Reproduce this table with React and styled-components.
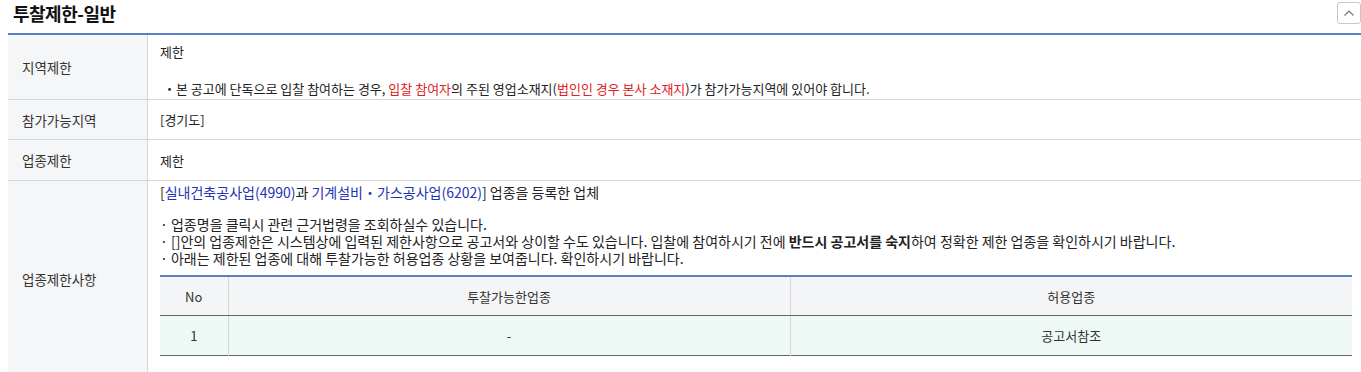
import React from "react";
import styled, { createGlobalStyle } from "styled-components";

const Global = createGlobalStyle`
  html, body { margin: 0; padding: 0; background: #fff; }
  body {
    font-family: "Noto Sans CJK KR", "Noto Sans", sans-serif;
    color: #222;
    font-size: 13px;
  }
`;

const Wrap = styled.div`
  padding-left: 8px;
`;

const Header = styled.div`
  display: flex;
  align-items: center;
  justify-content: space-between;
  height: 33px;
`;

const Title = styled.h2`
  margin: 0 0 8px 5px;
  font-size: 18px;
  line-height: 22px;
  font-weight: 700;
  letter-spacing: -0.5px;
  color: #111;
`;

const Toggle = styled.button`
  width: 24px;
  height: 22px;
  margin-bottom: 8px;
  padding: 0;
  border: 1px solid #c8c8c8;
  border-radius: 3px;
  background: #fff;
  display: flex;
  align-items: center;
  justify-content: center;
  color: #777;
`;

const Sheet = styled.div`
  border-top: 2px solid #5b7fc7;
`;

const Row = styled.div`
  display: grid;
  grid-template-columns: 140px 1fr;
  border-bottom: 1px solid #d6d6d6;
`;

const Label = styled.div`
  background: #f5f6f8;
  border-right: 1px solid #d6d6d6;
  display: flex;
  align-items: center;
  padding-left: 14px;
  font-size: 13.5px;
  color: #333;
`;

const Value = styled.div`
  padding: ${(p) => p.$pad || "11px 12px"};
  line-height: 17px;
  font-size: ${(p) => p.$fs || 13}px;
`;

const Line = styled.div`
  margin-top: ${(p) => p.$mt || 0}px;
  white-space: nowrap;
`;

const Red = styled.span`
  color: #e0211f;
`;

const Link = styled.span`
  color: #2233b5;
`;

const B = styled.b`
  font-weight: 700;
`;

const SubTable = styled.table`
  margin-top: ${(p) => p.$mt || 0}px;
  width: calc(100% - 9px);
  border-collapse: collapse;
  border-top: 2px solid #5b7fc7;
  border-bottom: 1px solid #666;
  table-layout: fixed;
`;

const Th = styled.th`
  height: 38px;
  padding: 0;
  background: #f4f5f7;
  font-weight: 400;
  font-size: 13px;
  color: #333;
  border-bottom: 1px solid #666;
  border-left: 1px solid #d6d6d6;
  &:first-child { border-left: none; }
`;

const Td = styled.td`
  height: 39px;
  padding: 0;
  background: #eef8f4;
  text-align: center;
  font-size: 13px;
  color: #333;
  border-left: 1px solid #d6d6d6;
  &:first-child { border-left: none; }
`;

export default function App() {
  return (
    <Wrap>
      <Global />
      <Header>
        <Title>투찰제한-일반</Title>
        <Toggle aria-label="접기">
          <svg width="12" height="8" viewBox="0 0 12 8" fill="none">
            <path d="M1.5 6.5 L6 2 L10.5 6.5" stroke="#777" strokeWidth="1.2" />
          </svg>
        </Toggle>
      </Header>
      <Sheet>
        <Row>
          <Label>지역제한</Label>
          <Value $pad="8px 12px 2px">
            <Line>제한</Line>
            <Line $mt={20}>
              &nbsp;・본 공고에 단독으로 입찰 참여하는 경우, <Red>입찰 참여자</Red>의 주된
              영업소재지(<Red>법인인 경우 본사 소재지</Red>)가 참가가능지역에 있어야 합니다.
            </Line>
          </Value>
        </Row>
        <Row>
          <Label>참가가능지역</Label>
          <Value $pad="11px 12px 11px">[경기도]</Value>
        </Row>
        <Row>
          <Label>업종제한</Label>
          <Value $pad="12px 12px 11px">제한</Value>
        </Row>
        <Row>
          <Label>업종제한사항</Label>
          <Value $pad="3px 0 20px 12px" $fs={14}>
            <Line>
              [<Link>실내건축공사업(4990)</Link>과 <Link>기계설비・가스공사업(6202)</Link>] 업종을 등록한 업체
            </Line>
            <Line $mt={15}>· 업종명을 클릭시 관련 근거법령을 조회하실수 있습니다.</Line>
            <Line>
              · []안의 업종제한은 시스템상에 입력된 제한사항으로 공고서와 상이할 수도 있습니다. 입찰에 참여하시기 전에{" "}
              <B>반드시 공고서를 숙지</B>하여 정확한 제한 업종을 확인하시기 바랍니다.
            </Line>
            <Line>· 아래는 제한된 업종에 대해 투찰가능한 허용업종 상황을 보여줍니다. 확인하시기 바랍니다.</Line>
            <SubTable $mt={8}>
              <colgroup>
                <col style={{ width: "68px" }} />
                <col />
                <col />
              </colgroup>
              <thead>
                <tr>
                  <Th>No</Th>
                  <Th>투찰가능한업종</Th>
                  <Th>허용업종</Th>
                </tr>
              </thead>
              <tbody>
                <tr>
                  <Td>1</Td>
                  <Td>-</Td>
                  <Td>공고서참조</Td>
                </tr>
              </tbody>
            </SubTable>
          </Value>
        </Row>
      </Sheet>
    </Wrap>
  );
}
